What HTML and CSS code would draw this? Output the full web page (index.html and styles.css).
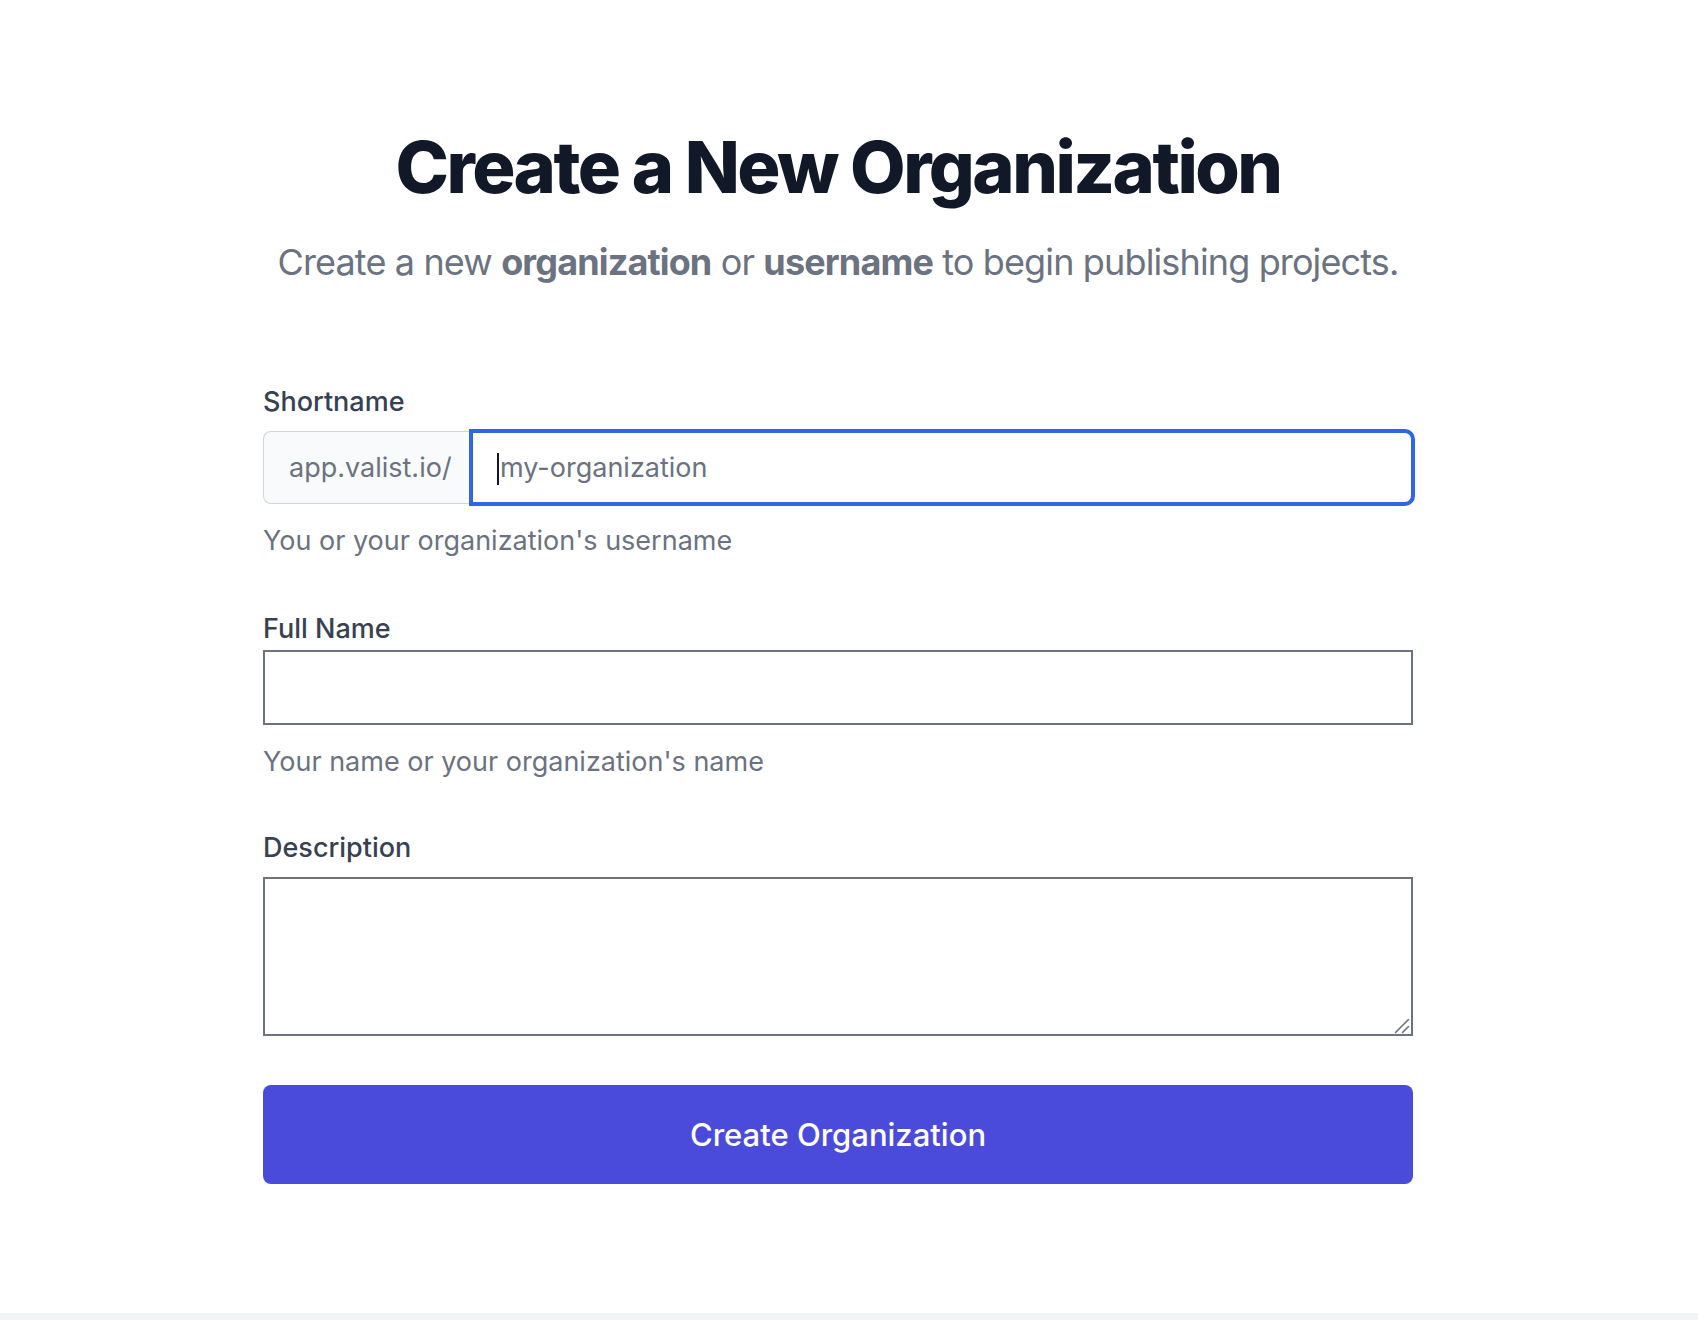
FILE: index.html
```html
<!DOCTYPE html>
<html lang="en">
<head>
<meta charset="utf-8">
<title>Create a New Organization</title>
<link rel="stylesheet" href="styles.css">
</head>
<body>
<main class="page">
  <div class="container">
    <h1 class="title">Create a New Organization</h1>
    <p class="subtitle">Create a new <strong>organization</strong> or <strong>username</strong> to begin publishing projects.</p>

    <form class="form">
      <div class="field field-short">
        <label class="label" for="shortname">Shortname</label>
        <div class="input-group">
          <span class="addon">app.valist.io/</span>
          <div class="focus-wrap">
            <input id="shortname" class="input input-focus" type="text" placeholder="my-organization">
            <span class="caret"></span>
          </div>
        </div>
        <p class="help">You or your organization's username</p>
      </div>

      <div class="field field-full">
        <label class="label label-tight" for="fullname">Full Name</label>
        <input id="fullname" class="input input-plain" type="text">
        <p class="help">Your name or your organization's name</p>
      </div>

      <div class="field field-desc">
        <label class="label" for="description">Description</label>
        <div class="textarea-wrap">
          <textarea id="description" class="textarea"></textarea>
          <svg class="resizer" width="16" height="16" viewBox="0 0 16 16" aria-hidden="true">
            <line x1="1.5" y1="14.5" x2="14.5" y2="1.5" stroke="#6b7280" stroke-width="1.6" stroke-linecap="round"/>
            <line x1="8.5" y1="14.5" x2="14.5" y2="8.5" stroke="#6b7280" stroke-width="1.6" stroke-linecap="round"/>
          </svg>
        </div>
      </div>

      <button type="button" class="button">Create Organization</button>
    </form>
  </div>
</main>
</body>
</html>
```

FILE: styles.css
```css
* { box-sizing: border-box; }

html, body {
  margin: 0;
  padding: 0;
}

body {
  background: #f3f4f6;
  font-family: Inter, "Noto Sans", "Liberation Sans", sans-serif;
  color: #111827;
}

.page {
  background: #ffffff;
  min-height: 1313px;
  padding: 131px 22px 0 0;
}

.container {
  width: 1150px;
  margin: 0 auto;
}

.title {
  margin: 0;
  font-size: 72px;
  line-height: 72px;
  font-weight: 800;
  letter-spacing: -0.035em;
  text-align: center;
  color: #111827;
}

.subtitle {
  margin: 35px -60px 0;
  font-size: 36px;
  line-height: 48px;
  font-weight: 400;
  letter-spacing: -0.024em;
  text-align: center;
  white-space: nowrap;
  color: #6b7280;
}

.subtitle strong {
  font-weight: 700;
}

.form {
  margin-top: 98px;
  display: flex;
  flex-direction: column;
}

.label {
  display: block;
  font-size: 27px;
  line-height: 36px;
  font-weight: 500;
  color: #374151;
}

.field-short .label { margin-bottom: 11px; }
.label-tight { margin-bottom: 3px; }
.field-desc .label { margin-bottom: 11px; }

.field-full { margin-top: 52px; }
.field-desc { margin-top: 50px; }

.input-group {
  display: flex;
  height: 73px;
}

.addon {
  display: flex;
  align-items: center;
  width: 208px;
  padding-left: 25px;
  background: #f9fafb;
  border: 1px solid #d1d5db;
  border-right: none;
  border-radius: 8px 0 0 8px;
  font-size: 27px;
  color: #6b7280;
}

.focus-wrap {
  position: relative;
  flex: 1;
  display: flex;
}

.input {
  font-family: inherit;
  font-size: 27px;
  color: #111827;
  outline: none;
  background: #ffffff;
  margin: 0;
}

.input::placeholder {
  color: #6b7280;
  opacity: 1;
}

.input-focus {
  flex: 1;
  height: 73px;
  border: 2px solid #2f66e3;
  box-shadow: 0 0 0 2px #2f66e3;
  border-radius: 0 8px 8px 0;
  padding: 0 0 0 27px;
}

.caret {
  position: absolute;
  left: 26px;
  top: 22px;
  width: 2px;
  height: 32px;
  background: #111827;
}

.input-plain {
  display: block;
  width: 100%;
  height: 75px;
  border: 2px solid #6b7280;
  border-radius: 0;
  padding: 0 20px;
}

.help {
  margin: 19px 0 0;
  font-size: 27px;
  line-height: 36px;
  color: #6b7280;
}

.textarea-wrap {
  position: relative;
}

.textarea {
  display: block;
  width: 100%;
  height: 159px;
  border: 2px solid #6b7280;
  border-radius: 0;
  font-family: inherit;
  font-size: 24px;
  padding: 12px 20px;
  margin: 0;
  outline: none;
  resize: none;
}

.resizer {
  position: absolute;
  right: 3px;
  bottom: 2px;
}

.button {
  margin-top: 49px;
  height: 99px;
  width: 100%;
  border: none;
  border-radius: 8px;
  background: #4b4bdb;
  color: #ffffff;
  font-family: inherit;
  font-size: 31px;
  font-weight: 500;
  cursor: pointer;
}
```
